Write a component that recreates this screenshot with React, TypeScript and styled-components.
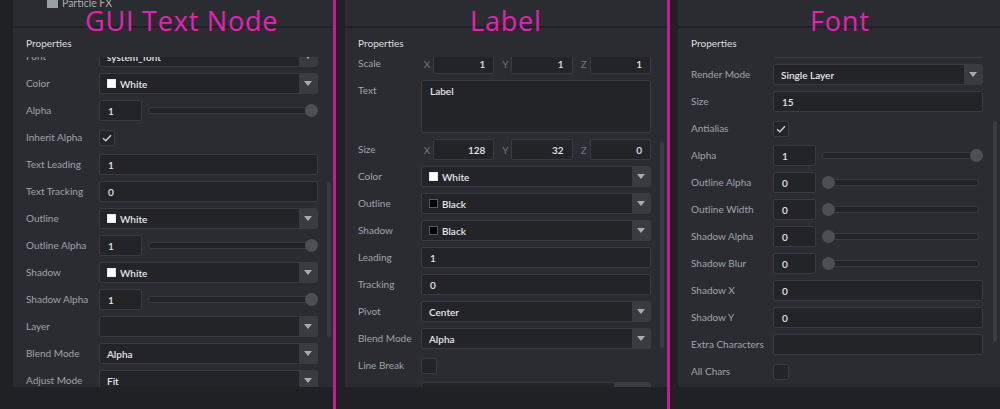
import React from 'react';
import styled, { createGlobalStyle } from 'styled-components';

const GlobalStyle = createGlobalStyle`
  html, body { margin: 0; padding: 0; background: #202125; }
  body { font-family: Lato, "Noto Sans", sans-serif; }
`;

const Stage = styled.div`
  position: relative;
  width: 1000px;
  height: 409px;
  display: flex;
  background: #202125;
  overflow: hidden;
`;

const Screen = styled.div<{ $w: number }>`
  width: ${(p) => p.$w}px;
  height: 409px;
  display: flex;
  flex: none;
`;

const Gutter = styled.div<{ $w: number }>`
  width: ${(p) => p.$w}px;
  flex: none;
`;

const Inspector = styled.div`
  flex: 1;
  min-width: 0;
  height: 387px;
  display: flex;
  flex-direction: column;
  background: #2b2c31;
`;

const Divider = styled.div`
  width: 3px;
  flex: none;
  background: #c41c92;
`;

const OutlinePane = styled.div`
  height: 26px;
  flex: none;
  overflow: hidden;
`;

const TreeItem = styled.div<{ $indent: number }>`
  display: flex;
  align-items: center;
  gap: 4px;
  height: 20px;
  margin-top: -7px;
  padding-left: ${(p) => p.$indent}px;
  color: #a9aeb5;
  font-size: 10.5px;
`;

const Rule = styled.div`
  height: 2px;
  flex: none;
  background: #202125;
`;

const SectionHeader = styled.div`
  height: 29px;
  flex: none;
  display: flex;
  align-items: center;
  padding-left: 13px;
  color: #d3d6da;
  font-size: 10px;
  font-weight: 500;
`;

const ListViewport = styled.div`
  flex: 1;
  min-height: 0;
  overflow: hidden;
  position: relative;
`;

const RowStack = styled.div<{ $offset: number; $right: number }>`
  display: flex;
  flex-direction: column;
  gap: 6px;
  margin-top: ${(p) => -p.$offset}px;
  padding: 0 ${(p) => p.$right}px 0 13px;
`;

const Row = styled.div<{ $top?: boolean }>`
  display: flex;
  align-items: ${(p) => (p.$top ? 'flex-start' : 'center')};
  min-height: 21px;
  flex: none;
`;

const Label = styled.div<{ $w: number }>`
  width: ${(p) => p.$w}px;
  flex: none;
  line-height: 21px;
  color: #9ea4ac;
  font-size: 10px;
  white-space: nowrap;
`;

const Field = styled.div`
  flex: 1;
  min-width: 0;
  display: flex;
  align-items: center;
  gap: 6px;
`;

const TextBox = styled.div<{ $right?: boolean; $w?: number; $h?: number }>`
  box-sizing: border-box;
  height: ${(p) => p.$h ?? 21}px;
  ${(p) => (p.$w ? `width: ${p.$w}px; flex: none;` : 'flex: 1; min-width: 0;')}
  display: flex;
  align-items: ${(p) => (p.$h ? 'flex-start' : 'center')};
  justify-content: ${(p) => (p.$right ? 'flex-end' : 'flex-start')};
  padding: ${(p) => (p.$h ? '4px 8px' : '0 8px')};
  background: #232428;
  border: 1px solid #393b40;
  border-radius: 2px;
  color: #e3e5e8;
  font-size: 10px;
  font-weight: 600;
  line-height: 12px;
  white-space: nowrap;
`;

const SelectBox = styled.div`
  box-sizing: border-box;
  flex: 1;
  min-width: 0;
  height: 21px;
  display: flex;
  background: #232428;
  border: 1px solid #393b40;
  border-radius: 2px;
  overflow: hidden;
`;

const SelectValue = styled.div`
  flex: 1;
  min-width: 0;
  display: flex;
  align-items: center;
  gap: 4px;
  padding-left: 7px;
  color: #e3e5e8;
  font-size: 10px;
  font-weight: 600;
  white-space: nowrap;
`;

const ArrowBox = styled.div<{ $w?: number }>`
  width: ${(p) => p.$w ?? 18}px;
  flex: none;
  display: flex;
  align-items: center;
  justify-content: center;
  background: #393b40;
`;

const Swatch = styled.span<{ $c: string }>`
  box-sizing: border-box;
  width: 9px;
  height: 9px;
  flex: none;
  background: ${(p) => p.$c};
  border: 1px solid ${(p) => (p.$c === '#000' ? '#55575c' : '#e8e8e8')};
`;

const CheckBox = styled.div`
  box-sizing: border-box;
  width: 16px;
  height: 16px;
  flex: none;
  display: flex;
  align-items: center;
  justify-content: center;
  background: #232428;
  border: 1px solid #393b40;
  border-radius: 2px;
`;

const SliderArea = styled.div`
  flex: 1;
  min-width: 0;
  height: 21px;
  position: relative;
  display: flex;
  align-items: center;
`;

const SliderTrack = styled.div`
  box-sizing: border-box;
  flex: 1;
  height: 7px;
  margin-right: 4px;
  background: #222327;
  border: 1px solid #393b40;
  border-radius: 3px;
`;

const SliderKnob = styled.div`
  position: absolute;
  top: 4px;
  width: 13px;
  height: 13px;
  border-radius: 50%;
  background: #4d4f54;
`;

const VecGrid = styled.div`
  flex: 1;
  min-width: 0;
  display: grid;
  grid-template-columns: 1fr 1fr 1fr;
  gap: 5px;
`;

const VecCell = styled.div`
  display: flex;
  align-items: center;
  min-width: 0;
`;

const Axis = styled.span`
  width: 12px;
  flex: none;
  text-align: center;
  color: #70767e;
  font-size: 10px;
`;

const ScrollThumb = styled.div<{ $top: number; $h: number; $right: number }>`
  position: absolute;
  right: ${(p) => p.$right}px;
  top: ${(p) => p.$top}px;
  width: 4px;
  height: ${(p) => p.$h}px;
  border-radius: 2px;
  background: #3a3c41;
`;

const Title = styled.div<{ $x: number }>`
  position: absolute;
  top: 7px;
  left: ${(p) => p.$x}px;
  font-family: "Open Sans", "Noto Sans", sans-serif;
  font-weight: 400;
  font-size: 27px;
  line-height: 27px;
  letter-spacing: 0.8px;
  color: #e81fb4;
  white-space: nowrap;
  pointer-events: none;
`;

const Arrow = () => (
  <svg width="8" height="5" viewBox="0 0 8 5">
    <path d="M0 0 L8 0 L4 5 Z" fill="#a6abb2" />
  </svg>
);

const Check = () => (
  <svg width="10" height="8" viewBox="0 0 10 8">
    <polyline points="1,4.2 3.8,6.8 9,1.2" fill="none" stroke="#c9ccd0" strokeWidth="1.5" />
  </svg>
);

const Folder = () => (
  <svg width="11" height="10" viewBox="0 0 11 10">
    <path d="M0 1 H4 L5 2 H11 V10 H0 Z" fill="#9a9fa6" />
  </svg>
);

type Prop =
  | { kind: 'select'; label: string; value: string; swatch?: string }
  | { kind: 'text'; label: string; value: string }
  | { kind: 'check'; label: string; checked: boolean }
  | { kind: 'slider'; label: string; value: string; pos: number }
  | { kind: 'vec3'; label: string; values: [string, string, string] }
  | { kind: 'area'; label: string; value: string }
  | { kind: 'picker'; label: string; value: string };

const KNOB = 13;

const Slider = ({ pos }: { pos: number }) => {
  const ref = React.useRef<HTMLDivElement>(null);
  const [w, setW] = React.useState(0);
  React.useLayoutEffect(() => {
    if (ref.current) setW(ref.current.getBoundingClientRect().width);
  }, []);
  return (
    <SliderArea ref={ref}>
      <SliderTrack />
      <SliderKnob style={{ left: pos * Math.max(0, w - KNOB) }} />
    </SliderArea>
  );
};

const PropRow = ({ p, lw }: { p: Prop; lw: number }) => {
  let control: React.ReactNode = null;
  switch (p.kind) {
    case 'select':
      control = (
        <SelectBox>
          <SelectValue>
            {p.swatch && <Swatch $c={p.swatch} />}
            {p.value}
          </SelectValue>
          <ArrowBox>
            <Arrow />
          </ArrowBox>
        </SelectBox>
      );
      break;
    case 'text':
      control = <TextBox>{p.value}</TextBox>;
      break;
    case 'check':
      control = <CheckBox>{p.checked && <Check />}</CheckBox>;
      break;
    case 'slider':
      control = (
        <>
          <TextBox $w={43}>{p.value}</TextBox>
          <Slider pos={p.pos} />
        </>
      );
      break;
    case 'vec3':
      control = (
        <VecGrid>
          {(['X', 'Y', 'Z'] as const).map((a, i) => (
            <VecCell key={a}>
              <Axis>{a}</Axis>
              <TextBox $right>{p.values[i]}</TextBox>
            </VecCell>
          ))}
        </VecGrid>
      );
      break;
    case 'area':
      control = <TextBox $h={53}>{p.value}</TextBox>;
      break;
    case 'picker':
      control = (
        <SelectBox>
          <SelectValue>{p.value}</SelectValue>
          <ArrowBox $w={36} />
        </SelectBox>
      );
      break;
  }
  return (
    <Row $top={p.kind === 'area'}>
      <Label $w={lw}>{p.label}</Label>
      <Field>{control}</Field>
    </Row>
  );
};

type PanelDef = {
  screenW: number;
  gutterW: number;
  labelW: number;
  right: number;
  offset: number;
  thumb: { top: number; h: number; right: number };
  tree?: boolean;
  rows: Prop[];
};

const panels: PanelDef[] = [
  {
    screenW: 333,
    gutterW: 13,
    labelW: 73,
    right: 15,
    offset: 11,
    thumb: { top: 125, h: 155, right: 2 },
    tree: true,
    rows: [
      { kind: 'select', label: 'Font', value: 'system_font' },
      { kind: 'select', label: 'Color', value: 'White', swatch: '#fff' },
      { kind: 'slider', label: 'Alpha', value: '1', pos: 1 },
      { kind: 'check', label: 'Inherit Alpha', checked: true },
      { kind: 'text', label: 'Text Leading', value: '1' },
      { kind: 'text', label: 'Text Tracking', value: '0' },
      { kind: 'select', label: 'Outline', value: 'White', swatch: '#fff' },
      { kind: 'slider', label: 'Outline Alpha', value: '1', pos: 1 },
      { kind: 'select', label: 'Shadow', value: 'White', swatch: '#fff' },
      { kind: 'slider', label: 'Shadow Alpha', value: '1', pos: 1 },
      { kind: 'select', label: 'Layer', value: '' },
      { kind: 'select', label: 'Blend Mode', value: 'Alpha' },
      { kind: 'select', label: 'Adjust Mode', value: 'Fit' },
    ],
  },
  {
    screenW: 331,
    gutterW: 9,
    labelW: 63,
    right: 16,
    offset: 4,
    thumb: { top: 85, h: 206, right: 3 },
    rows: [
      { kind: 'vec3', label: 'Scale', values: ['1', '1', '1'] },
      { kind: 'area', label: 'Text', value: 'Label' },
      { kind: 'vec3', label: 'Size', values: ['128', '32', '0'] },
      { kind: 'select', label: 'Color', value: 'White', swatch: '#fff' },
      { kind: 'select', label: 'Outline', value: 'Black', swatch: '#000' },
      { kind: 'select', label: 'Shadow', value: 'Black', swatch: '#000' },
      { kind: 'text', label: 'Leading', value: '1' },
      { kind: 'text', label: 'Tracking', value: '0' },
      { kind: 'select', label: 'Pivot', value: 'Center' },
      { kind: 'select', label: 'Blend Mode', value: 'Alpha' },
      { kind: 'check', label: 'Line Break', checked: false },
      { kind: 'picker', label: 'Font', value: '' },
    ],
  },
  {
    screenW: 330,
    gutterW: 8,
    labelW: 82,
    right: 17,
    offset: 20,
    thumb: { top: 64, h: 221, right: 3 },
    rows: [
      { kind: 'text', label: 'Font', value: '' },
      { kind: 'select', label: 'Render Mode', value: 'Single Layer' },
      { kind: 'text', label: 'Size', value: '15' },
      { kind: 'check', label: 'Antialias', checked: true },
      { kind: 'slider', label: 'Alpha', value: '1', pos: 1 },
      { kind: 'slider', label: 'Outline Alpha', value: '0', pos: 0 },
      { kind: 'slider', label: 'Outline Width', value: '0', pos: 0 },
      { kind: 'slider', label: 'Shadow Alpha', value: '0', pos: 0 },
      { kind: 'slider', label: 'Shadow Blur', value: '0', pos: 0 },
      { kind: 'text', label: 'Shadow X', value: '0' },
      { kind: 'text', label: 'Shadow Y', value: '0' },
      { kind: 'text', label: 'Extra Characters', value: '' },
      { kind: 'check', label: 'All Chars', checked: false },
    ],
  },
];

const titles = [
  { text: 'GUI Text Node', x: 85 },
  { text: 'Label', x: 470 },
  { text: 'Font', x: 810 },
];

const Panel = ({ d }: { d: PanelDef }) => (
  <Screen $w={d.screenW}>
    <Gutter $w={d.gutterW} />
    <Inspector>
      <OutlinePane>
        {d.tree && (
          <TreeItem $indent={34}>
            <Folder />
            Particle FX
          </TreeItem>
        )}
      </OutlinePane>
      <Rule />
      <SectionHeader>Properties</SectionHeader>
      <ListViewport>
        <RowStack $offset={d.offset} $right={d.right}>
          {d.rows.map((r, i) => (
            <PropRow key={i} p={r} lw={d.labelW} />
          ))}
        </RowStack>
        <ScrollThumb $top={d.thumb.top} $h={d.thumb.h} $right={d.thumb.right} />
      </ListViewport>
    </Inspector>
  </Screen>
);

export default function App() {
  return (
    <>
      <GlobalStyle />
      <Stage>
        <Panel d={panels[0]} />
        <Divider />
        <Panel d={panels[1]} />
        <Divider />
        <Panel d={panels[2]} />
        {titles.map((t) => (
          <Title key={t.text} $x={t.x}>
            {t.text}
          </Title>
        ))}
      </Stage>
    </>
  );
}
